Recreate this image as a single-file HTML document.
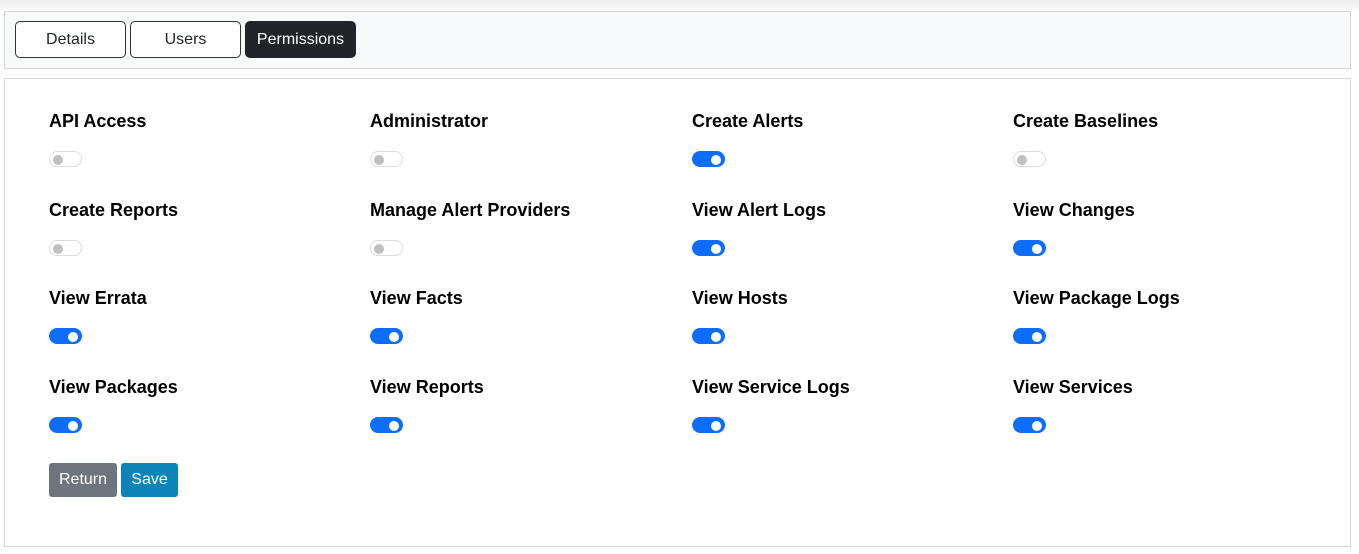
<!DOCTYPE html>
<html><head><style>
*{box-sizing:border-box;margin:0;padding:0}
body{width:1359px;height:554px;background:#fff;font-family:"Liberation Sans",Arial,sans-serif;position:relative;overflow:hidden}
.top{position:absolute;left:0;top:0;width:1359px;height:10px;background:linear-gradient(#ececec,#fafafa)}
.bar{position:absolute;left:4px;top:11px;width:1347px;height:58px;background:#f8f9fa;border:1px solid #d6d6d6}
.tab{position:absolute;top:9px;height:37px;width:111px;border:1px solid #333;border-radius:5px;background:#fff;font-size:16px;color:#212529;text-align:center;line-height:35px}
.tab.a{background:#212529;color:#fff;border-color:#212529}
.panel{position:absolute;left:4px;top:78px;width:1347px;height:469px;border:1px solid #d6d6d6;background:#fff}
.lbl{position:absolute;font-weight:bold;font-size:18px;color:#000;line-height:20px}
.tg{position:absolute;width:33px;height:16px;border-radius:8px;border:1px solid #dcdcdc;background:#fff}
.tg::after{content:"";position:absolute;left:3px;top:3px;width:10px;height:10px;border-radius:50%;background:#c0c0c0}
.tg.on{background:#0d6efd;border-color:#0d6efd}
.tg.on::after{left:auto;right:3px;background:#fff}
.btn{position:absolute;top:463px;height:34px;border-radius:3px;color:#fff;font-size:16px;line-height:34px;text-align:center}
</style></head><body>
<div class="top"></div>
<div class="bar">
<div class="tab" style="left:10px">Details</div>
<div class="tab" style="left:125px">Users</div>
<div class="tab a" style="left:240px">Permissions</div>
</div>
<div class="panel"></div>
<div id="g"></div>
<div class="btn" style="left:49px;width:68px;background:#6c757d">Return</div>
<div class="btn" style="left:121px;width:57px;background:#0d84b8">Save</div>
<script>
var items=[["API Access",0],["Administrator",0],["Create Alerts",1],["Create Baselines",0],
["Create Reports",0],["Manage Alert Providers",0],["View Alert Logs",1],["View Changes",1],
["View Errata",1],["View Facts",1],["View Hosts",1],["View Package Logs",1],
["View Packages",1],["View Reports",1],["View Service Logs",1],["View Services",1]];
var xs=[49,370,692,1013],ys=[122,211,299,388],h="";
items.forEach(function(it,i){var x=xs[i%4],y=ys[Math.floor(i/4)];
h+='<div class="lbl" style="left:'+x+'px;top:'+(y-11)+'px">'+it[0]+'</div>';
h+='<div class="tg'+(it[1]?' on':'')+'" style="left:'+x+'px;top:'+(y+29)+'px"></div>';});
document.getElementById("g").innerHTML=h;
</script>
</body></html>
